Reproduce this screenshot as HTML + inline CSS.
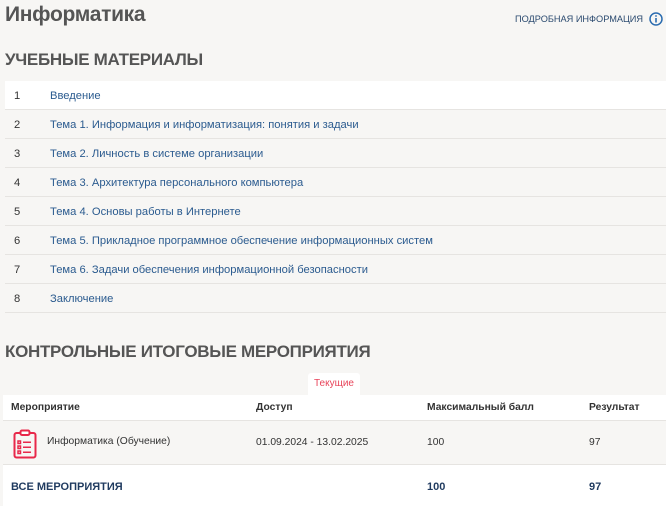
<!DOCTYPE html>
<html><head><meta charset="utf-8"><style>
*{margin:0;padding:0;box-sizing:border-box}
body{width:666px;height:506px;background:#f7f6f4;font-family:"Liberation Sans","Noto Sans CJK SC",sans-serif;overflow:hidden;position:relative;color:#333}
.abs{position:absolute;white-space:nowrap}
h1{position:absolute;left:5px;top:3px;font-size:21px;font-weight:bold;color:#555;letter-spacing:-0.3px}
.h2{position:absolute;left:5px;font-size:17px;font-weight:bold;color:#555;letter-spacing:-0.3px}
.row{position:absolute;left:5px;width:661px;height:29px;border-bottom:1px solid #e6e4e1;font-size:11.2px}
.row .n{position:absolute;left:9px;top:9px;color:#333}
.row .t{position:absolute;left:45px;top:9px;color:#2b5b8f}
.hd{font-size:10.3px;font-weight:bold;color:#333}
.c{font-size:10.3px;color:#333}
</style></head><body>
<h1>Информатика</h1>
<div class="abs" style="left:515px;top:14px;font-size:9.2px;color:#2b4a6f">ПОДРОБНАЯ ИНФОРМАЦИЯ</div>
<svg class="abs" style="left:649px;top:12px" width="14" height="14" viewBox="0 0 14 14"><circle cx="7" cy="7" r="6" fill="none" stroke="#2b6cb0" stroke-width="1.5"/><rect x="6.2" y="6" width="1.6" height="4.5" fill="#2b6cb0"/><circle cx="7" cy="4" r="0.9" fill="#2b6cb0"/></svg>
<div class="h2" style="top:50px">УЧЕБНЫЕ МАТЕРИАЛЫ</div>
<div class="row" style="top:81px;background:#fff"><span class="n">1</span><span class="t">Введение</span></div>
<div class="row" style="top:110px"><span class="n">2</span><span class="t">Тема 1. Информация и информатизация: понятия и задачи</span></div>
<div class="row" style="top:139px"><span class="n">3</span><span class="t">Тема 2. Личность в системе организации</span></div>
<div class="row" style="top:168px"><span class="n">4</span><span class="t">Тема 3. Архитектура персонального компьютера</span></div>
<div class="row" style="top:197px"><span class="n">5</span><span class="t">Тема 4. Основы работы в Интернете</span></div>
<div class="row" style="top:226px"><span class="n">6</span><span class="t">Тема 5. Прикладное программное обеспечение информационных систем</span></div>
<div class="row" style="top:255px"><span class="n">7</span><span class="t">Тема 6. Задачи обеспечения информационной безопасности</span></div>
<div class="row" style="top:284px"><span class="n">8</span><span class="t">Заключение</span></div>
<div class="h2" style="top:342px">КОНТРОЛЬНЫЕ ИТОГОВЫЕ МЕРОПРИЯТИЯ</div>
<div class="abs" style="left:308px;top:373px;width:52px;height:23px;background:#fff;border-radius:3px 3px 0 0;font-size:10px;color:#e8445a;text-align:center;padding-top:5px">Текущие</div>
<div class="abs" style="left:3px;top:395px;width:663px;height:26px;background:#fff;border-bottom:1px solid #e6e4e1"></div>
<div class="abs hd" style="left:11px;top:402px">Мероприятие</div>
<div class="abs hd" style="left:256px;top:402px">Доступ</div>
<div class="abs hd" style="left:427px;top:402px">Максимальный балл</div>
<div class="abs hd" style="left:589px;top:402px">Результат</div>
<svg class="abs" style="left:13px;top:429px" width="24" height="30" viewBox="0 0 24 30"><rect x="1.5" y="4" width="21" height="24.5" rx="2" fill="none" stroke="#e8284a" stroke-width="2"/><rect x="7.5" y="1.5" width="9" height="4.5" rx="1.5" fill="#fff" stroke="#e8284a" stroke-width="2"/><g fill="none" stroke="#e8284a" stroke-width="1.5"><rect x="5" y="12" width="2.5" height="2.5"/><rect x="5" y="17" width="2.5" height="2.5"/><rect x="5" y="22" width="2.5" height="2.5"/><path d="M10 13.2h8M10 18.2h8M10 23.2h8"/></g></svg>
<div class="abs c" style="left:47px;top:436px">Информатика (Обучение)</div>
<div class="abs c" style="left:256px;top:437px">01.09.2024 - 13.02.2025</div>
<div class="abs c" style="left:427px;top:437px">100</div>
<div class="abs c" style="left:589px;top:437px">97</div>
<div class="abs" style="left:3px;top:464px;width:663px;height:42px;background:#fff;border-top:1px solid #e6e4e1"></div>
<div class="abs" style="left:11px;top:481px;font-size:11px;font-weight:bold;color:#1f3a5f">ВСЕ МЕРОПРИЯТИЯ</div>
<div class="abs" style="left:427px;top:481px;font-size:11px;font-weight:bold;color:#1f3a5f">100</div>
<div class="abs" style="left:589px;top:481px;font-size:11px;font-weight:bold;color:#1f3a5f">97</div>
</body></html>
